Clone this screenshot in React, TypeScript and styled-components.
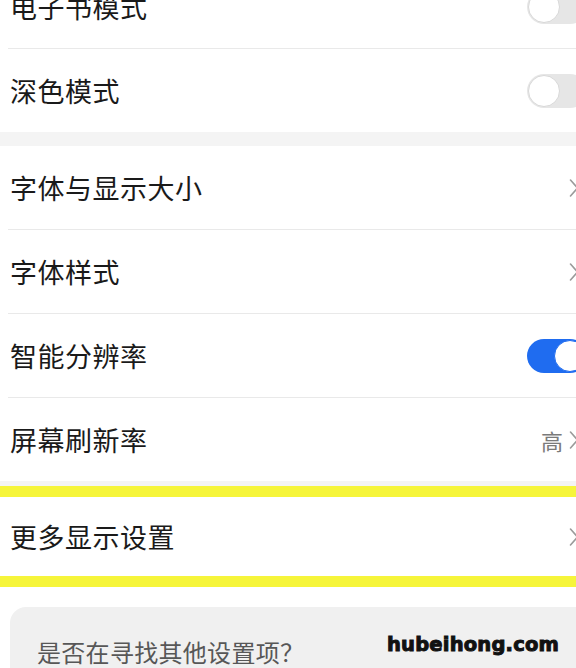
import React from "react";
import styled, { createGlobalStyle } from "styled-components";

const GlobalStyle = createGlobalStyle`
  html, body {
    margin: 0;
    padding: 0;
    background: #ffffff;
    overflow: hidden;
  }
  body {
    font-family: "Noto Sans CJK SC", "Noto Sans", sans-serif;
  }
`;

type RowItem =
  | { label: string; kind: "toggle"; on: boolean }
  | { label: string; kind: "link"; value?: string };

const topGroup: RowItem[] = [
  { label: "电子书模式", kind: "toggle", on: false },
  { label: "深色模式", kind: "toggle", on: false },
];

const displayGroup: RowItem[] = [
  { label: "字体与显示大小", kind: "link" },
  { label: "字体样式", kind: "link" },
  { label: "智能分辨率", kind: "toggle", on: true },
  { label: "屏幕刷新率", kind: "link", value: "高" },
];

const Chevron = () => (
  <ChevronIcon viewBox="0 0 10 20" width="10" height="20">
    <path d="M1.5 2 L8.5 10 L1.5 18" fill="none" stroke="#9a9a9a" strokeWidth="1.6" strokeLinecap="round" strokeLinejoin="round" />
  </ChevronIcon>
);

const Row = ({ item }: { item: RowItem }) => (
  <RowWrap>
    <Label>{item.label}</Label>
    <Trailing>
      {item.kind === "toggle" ? (
        <Switch $on={item.on}>
          <Knob $on={item.on} />
        </Switch>
      ) : (
        <>
          {item.value && <Value>{item.value}</Value>}
          <Chevron />
        </>
      )}
    </Trailing>
  </RowWrap>
);

export default function App() {
  return (
    <>
      <GlobalStyle />
      <Page>
        <Group>
          {topGroup.map((item) => (
            <Row key={item.label} item={item} />
          ))}
        </Group>
        <Gap />
        <Group>
          {displayGroup.map((item) => (
            <Row key={item.label} item={item} />
          ))}
        </Group>
        <Gap $short />
        <Highlight />
        <Group>
          <RowWrap $height={79}>
            <Label>更多显示设置</Label>
            <Trailing>
              <Chevron />
            </Trailing>
          </RowWrap>
        </Group>
        <Highlight />
        <Hint>
          <HintText>是否在寻找其他设置项？</HintText>
          <Watermark>hubeihong.com</Watermark>
        </Hint>
      </Page>
    </>
  );
}

const Page = styled.div`
  width: 601px;
  margin-top: -35px;
  background: #ffffff;
`;

const Group = styled.div`
  background: #ffffff;
  display: flex;
  flex-direction: column;
`;

const RowWrap = styled.div<{ $height?: number }>`
  position: relative;
  height: ${(p) => p.$height ?? 83}px;
  display: flex;
  align-items: center;
  justify-content: space-between;
  padding: 0 14px 0 10px;

  & + & {
    border-top: 1px solid transparent;
  }
  & + &::before {
    content: "";
    position: absolute;
    top: -1px;
    left: 8px;
    right: 0;
    height: 1px;
    background: #e9e9e9;
  }
`;

const Label = styled.span`
  font-size: 27px;
  color: #1a1a1a;
  letter-spacing: 0.5px;
`;

const Trailing = styled.div`
  display: flex;
  align-items: center;
  gap: 6px;
`;

const Value = styled.span`
  font-size: 22px;
  color: #7a7a7a;
`;

const ChevronIcon = styled.svg`
  display: block;
  margin-right: 8px;
`;

const Switch = styled.div<{ $on: boolean }>`
  width: 60px;
  height: 34px;
  border-radius: 17px;
  background: ${(p) => (p.$on ? "#1f6cf0" : "#e6e6e6")};
  display: flex;
  align-items: center;
  justify-content: ${(p) => (p.$on ? "flex-end" : "flex-start")};
  padding: 0 1px;
  box-sizing: border-box;
`;

const Knob = styled.div<{ $on: boolean }>`
  width: 32px;
  height: 32px;
  border-radius: 50%;
  background: #ffffff;
  box-sizing: border-box;
  border: 1px solid ${(p) => (p.$on ? "#1f6cf0" : "#d8d8d8")};
`;

const Gap = styled.div<{ $short?: boolean }>`
  height: ${(p) => (p.$short ? 5 : 14)}px;
  background: #f4f4f4;
`;

const Highlight = styled.div`
  height: 11px;
  background: #f6f53a;
`;

const Hint = styled.div`
  position: relative;
  margin: 20px 0 0 10px;
  height: 90px;
  border-radius: 16px 0 0 0;
  background: #f0f0f0;
  padding: 27px 0 0 27px;
  box-sizing: border-box;
`;

const HintText = styled.span`
  font-size: 24px;
  color: #575757;
  letter-spacing: 0.3px;
`;

const Watermark = styled.span`
  position: absolute;
  left: 377px;
  top: 26px;
  font-family: "DejaVu Sans", sans-serif;
  font-weight: 700;
  font-size: 19.5px;
  letter-spacing: 0.2px;
  color: #111111;
  -webkit-text-stroke: 1px #111111;
`;
